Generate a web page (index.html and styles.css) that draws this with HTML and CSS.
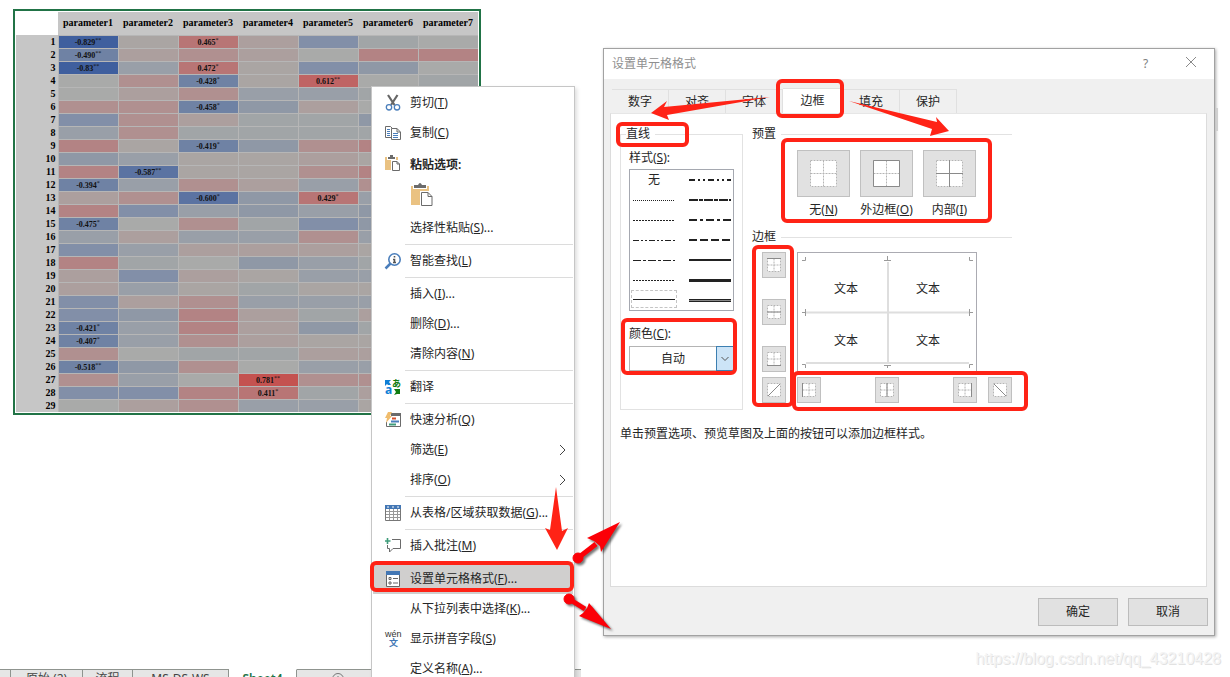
FILE: index.html
```html
<!DOCTYPE html>
<html lang="zh-CN">
<head>
<meta charset="utf-8">
<title>设置单元格格式</title>
<link rel="stylesheet" href="styles.css">
</head>
<body>
<svg class="defs" aria-hidden="true">
  <symbol id="grid-s" viewBox="0 0 14 14">
    <rect x="0" y="0" width="14" height="14" fill="#fff"/>
    <path d="M.5 .5H13.5V13.5H.5ZM7 .5V13.5M.5 7H13.5" fill="none" stroke="#b4b4b4" stroke-dasharray="2 1"/>
  </symbol>
  <symbol id="diag-s" viewBox="0 0 14 14">
    <rect x="0" y="0" width="14" height="14" fill="#fff"/>
    <path d="M.5 .5H13.5V13.5H.5Z" fill="none" stroke="#b4b4b4" stroke-dasharray="2 1"/>
  </symbol>
  <symbol id="grid-l" viewBox="0 0 27 27">
    <rect width="27" height="27" fill="#fff"/>
    <path d="M.5 .5H26.5V26.5H.5ZM13.5 .5V26.5M.5 13.5H26.5" fill="none" stroke="#b4b4b4" stroke-dasharray="2 1"/>
  </symbol>
  <symbol id="paste" viewBox="0 0 16 16">
    <path d="M0 2H13V15H0Z" fill="#eac282"/>
    <path d="M2 1H11V5H2Z" fill="#fff"/>
    <path d="M3 4V2H5V0H8V2H10V4Z" fill="#6b6b6b"/>
    <path d="M6 5H16V16H6Z" fill="#fff"/>
    <path d="M7.500 6.500H12L14.500 9V15.500H7.500ZM12 6.500V9H14.500" fill="#fff" stroke="#6b6b6b"/>
  </symbol>
</svg>

<main class="desktop">
  <section class="sheet">
    <table class="heat">
      <thead>
        <tr><td class="corner"></td><th>parameter1</th><th>parameter2</th><th>parameter3</th><th>parameter4</th><th>parameter5</th><th>parameter6</th><th>parameter7</th></tr>
      </thead>
      <tbody id="heat-body"></tbody>
    </table>
  </section>

  <section class="dialog" role="dialog" aria-labelledby="dialog-title">
    <header class="titlebar">
      <h1 class="title" id="dialog-title">设置单元格格式</h1>
      <button class="title-btn" type="button">?</button>
      <button class="title-btn" type="button" aria-label="关闭"><svg width="12" height="12" viewBox="0 0 12 12"><path d="M1 1L11 11M11 1L1 11" stroke="#8a8a8a" fill="none"/></svg></button>
    </header>
    <div class="tabs" role="tablist">
      <button class="tab" role="tab" type="button">数字</button>
      <button class="tab" role="tab" type="button">对齐</button>
      <button class="tab" role="tab" type="button">字体</button>
      <button class="tab tab-active" role="tab" type="button" aria-selected="true">边框</button>
      <button class="tab" role="tab" type="button">填充</button>
      <button class="tab" role="tab" type="button">保护</button>
    </div>
    <div class="panel" role="tabpanel">
      <div class="columns">
        <fieldset class="group line-group">
          <legend>直线</legend>
          <div class="label" id="style-label">样式(<u>S</u>):</div>
          <div class="styles" role="listbox" aria-labelledby="style-label">
            <span class="style none" role="option">无</span>
            <span class="style" role="option"><svg viewBox="0 0 42 6"><path d="M0 3H42" stroke-dasharray="6 3 2 3 2 3" stroke-width="2"/></svg></span>
            <span class="style" role="option"><svg viewBox="0 0 42 6"><path d="M0 3.500H42" stroke-dasharray="1 1"/></svg></span>
            <span class="style" role="option"><svg viewBox="0 0 42 6"><path d="M0 3H42" stroke-dasharray="9 1 4 1" stroke-width="2"/></svg></span>
            <span class="style" role="option"><svg viewBox="0 0 42 6"><path d="M0 3.500H42" stroke-dasharray="2 1"/></svg></span>
            <span class="style" role="option"><svg viewBox="0 0 42 6"><path d="M0 3H42" stroke-dasharray="8 3 3 3" stroke-width="2"/></svg></span>
            <span class="style" role="option"><svg viewBox="0 0 42 6"><path d="M0 3.500H42" stroke-dasharray="6 2 2 2 2 2"/></svg></span>
            <span class="style" role="option"><svg viewBox="0 0 42 6"><path d="M0 3H42" stroke-dasharray="8 3" stroke-width="2"/></svg></span>
            <span class="style" role="option"><svg viewBox="0 0 42 6"><path d="M0 3.500H42" stroke-dasharray="8 2 3 2"/></svg></span>
            <span class="style" role="option"><svg viewBox="0 0 42 6"><path d="M0 3H42" stroke-width="2"/></svg></span>
            <span class="style" role="option"><svg viewBox="0 0 42 6"><path d="M0 3.500H42" stroke-dasharray="2 1"/></svg></span>
            <span class="style" role="option"><svg viewBox="0 0 42 6"><path d="M0 3.500H42" stroke-width="3"/></svg></span>
            <span class="style chosen" role="option" aria-selected="true"><svg viewBox="0 0 42 6"><path d="M0 3.500H42"/></svg></span>
            <span class="style" role="option"><svg viewBox="0 0 42 6"><path d="M0 2.500H42M0 4.500H42"/><path d="M0 3.500H42" class="soft"/></svg></span>
          </div>
          <label class="label color-label" for="color">颜色(<u>C</u>):</label>
          <div class="combo">
            <select class="combo-select" id="color"><option>自动</option></select>
            <span class="combo-arrow"><svg width="8" height="6" viewBox="0 0 8 6"><path d="M.5 1L4 4.500L7.500 1" fill="none" stroke="#555"/></svg></span>
          </div>
        </fieldset>

        <div class="right-col">
          <fieldset class="group flat">
            <legend>预置</legend>
            <div class="presets">
              <div class="preset"><button class="cell-btn big" id="p-none" type="button" aria-label="无"><svg width="27" height="27"><use href="#grid-l"/></svg></button><label for="p-none">无(<u>N</u>)</label></div>
              <div class="preset"><button class="cell-btn big" id="p-out" type="button" aria-label="外边框"><svg width="27" height="27"><use href="#grid-l"/><path class="ink" d="M.5 .5H26.5V26.5H.5Z"/></svg></button><label for="p-out">外边框(<u>O</u>)</label></div>
              <div class="preset"><button class="cell-btn big" id="p-in" type="button" aria-label="内部"><svg width="27" height="27"><use href="#grid-l"/><path class="ink" d="M13.500 0V27M0 13.500H27"/></svg></button><label for="p-in">内部(<u>I</u>)</label></div>
            </div>
          </fieldset>
          <fieldset class="group flat">
            <legend>边框</legend>
            <div class="borders">
              <div class="side">
                <button class="cell-btn" type="button" aria-label="上边框"><svg width="14" height="14"><use href="#grid-s"/><path class="ink" d="M0 .5H14"/></svg></button>
                <button class="cell-btn" type="button" aria-label="水平内框"><svg width="14" height="14"><use href="#grid-s"/><path class="ink" d="M0 7H14"/></svg></button>
                <button class="cell-btn" type="button" aria-label="下边框"><svg width="14" height="14"><use href="#grid-s"/><path class="ink" d="M0 13.500H14"/></svg></button>
              </div>
              <div class="preview">
                <span>文本</span><span>文本</span><span>文本</span><span>文本</span>
                <svg class="guides" viewBox="0 0 178 118">
                  <path d="M90 9V110M8 59.500H171M8 110H171" stroke="#dedede" stroke-width="2"/>
                  <path d="M4 7.500H7.500V4M86 7.500H93M89.500 3V7M175 7.500H171.500V4M4 59.500H8M7.500 56V63M175 59.500H171M171.500 56V63M4 111.500H7.500V115M86 112.500H93M89.500 112V115M175 111.500H171.500V115" stroke="#9a9a9a"/>
                </svg>
              </div>
              <span></span>
              <button class="cell-btn" type="button" aria-label="斜线"><svg width="14" height="14"><use href="#diag-s"/><path class="ink" d="M1 13L13 1"/></svg></button>
              <div class="below">
                <button class="cell-btn" type="button" aria-label="左边框"><svg width="14" height="14"><use href="#grid-s"/><path class="ink" d="M.5 0V14"/></svg></button>
                <button class="cell-btn" type="button" aria-label="垂直内框"><svg width="14" height="14"><use href="#grid-s"/><path class="ink" d="M7 0V14"/></svg></button>
                <button class="cell-btn" type="button" aria-label="右边框"><svg width="14" height="14"><use href="#grid-s"/><path class="ink" d="M13.500 0V14"/></svg></button>
              </div>
              <button class="cell-btn" type="button" aria-label="反斜线"><svg width="14" height="14"><use href="#diag-s"/><path class="ink" d="M1 1L13 13"/></svg></button>
            </div>
          </fieldset>
        </div>
      </div>
      <p class="hint">单击预置选项、预览草图及上面的按钮可以添加边框样式。</p>
    </div>
    <footer class="actions">
      <button class="action" type="button">确定</button>
      <button class="action" type="button">取消</button>
    </footer>
  </section>

  <nav class="menu" role="menu">
    <button class="item" type="button"><svg class="icon" viewBox="0 0 16 16"><path d="M3 0L9.500 10M12.500 0L6 10" stroke="#666" stroke-width="2.200" fill="none"/><circle cx="4" cy="12.300" r="2.700" fill="#fff" stroke="#4a7ebb" stroke-width="1.300"/><circle cx="12" cy="12.300" r="2.700" fill="#fff" stroke="#4a7ebb" stroke-width="1.300"/></svg><span>剪切(<u>T</u>)</span></button>
    <button class="item" type="button"><svg class="icon" viewBox="0 0 16 16"><path d="M.5 1.500H5.500L8 4V12.500H.5Z" fill="#fff" stroke="#6b6b6b"/><path d="M2 4.500H5M2 6.500H5M2 8.500H5M2 10.500H5" stroke="#4a7ebb"/><path d="M6.500 3.500H12L15.500 7V14.500H6.500ZM12 3.500V7H15" fill="#fff" stroke="#6b6b6b"/><path d="M8 8.500H13M8 10.500H13M8 12.500H13" stroke="#4a7ebb"/></svg><span>复制(<u>C</u>)</span></button>
    <div class="item heading"><svg class="icon" viewBox="0 0 16 16"><use href="#paste"/></svg><span class="heading-text">粘贴选项:</span></div>
    <div class="paste-row"><button class="paste-btn" type="button" aria-label="粘贴"><svg width="24" height="24" viewBox="0 0 24 24"><path d="M1 4H19V23H1Z" fill="#eac282"/><path d="M3 3H17V7H3Z" fill="#fff"/><path d="M4 6V3H8Q10 -1 12 3H16V6Z" fill="#6b6b6b"/><path d="M10 9H24V24H10Z" fill="#fff"/><path d="M11.500 10.500H18L22 14.500V23.500H11.500ZM18 10.500V14.500H22" fill="#fff" stroke="#6b6b6b"/></svg></button></div>
    <button class="item" type="button"><span class="icon"></span><span>选择性粘贴(<u>S</u>)...</span></button>
    <hr class="sep">
    <button class="item" type="button"><svg class="icon" viewBox="0 0 16 16"><path d="M.5 15.500L5.500 10.500" stroke="#4a7ebb" stroke-width="2.500"/><circle cx="9.500" cy="6.500" r="5.700" fill="#fff" stroke="#4a7ebb" stroke-width="1.600"/><path d="M9.500 3V4.500M8 6.500H9.500V10M8 9.500H11" stroke="#555" stroke-width="1.600" fill="none"/></svg><span>智能查找(<u>L</u>)</span></button>
    <hr class="sep">
    <button class="item" type="button"><span class="icon"></span><span>插入(<u>I</u>)...</span></button>
    <button class="item" type="button"><span class="icon"></span><span>删除(<u>D</u>)...</span></button>
    <button class="item" type="button"><span class="icon"></span><span>清除内容(<u>N</u>)</span></button>
    <hr class="sep">
    <button class="item" type="button"><svg class="icon" viewBox="0 0 16 16"><path d="M0 1H6L4 3L6 6H3L2 5L0 7Z" fill="#0f7fd6"/><text x="0" y="15" class="tr-a">a</text><text x="7" y="8" class="tr-k">あ</text><path d="M9 10H15V15H12L9 16L11 13Z" fill="#107c10"/></svg><span>翻译</span></button>
    <hr class="sep">
    <button class="item" type="button"><svg class="icon" viewBox="0 0 16 16"><path d="M3.500 1.500H15.500V14.500H1.500V10" fill="#fff" stroke="#6b6b6b"/><path d="M6 1H16V4H6Z" fill="#6b6b6b"/><path d="M7 6.500H11" stroke="#d9502c" stroke-width="2"/><path d="M6 9.500H14" stroke="#4a7ebb" stroke-width="2"/><path d="M4 12.500H11" stroke="#3f9c7a" stroke-width="2"/><path d="M3 0H7L5 4H7L1 11L2 6H0Z" fill="#f0bc6c"/></svg><span>快速分析(<u>Q</u>)</span></button>
    <button class="item" type="button"><span class="icon"></span><span>筛选(<u>E</u>)</span><svg class="chev" viewBox="0 0 7 12"><path d="M1 1L6 6L1 11" fill="none" stroke="#444"/></svg></button>
    <button class="item" type="button"><span class="icon"></span><span>排序(<u>O</u>)</span><svg class="chev" viewBox="0 0 7 12"><path d="M1 1L6 6L1 11" fill="none" stroke="#444"/></svg></button>
    <hr class="sep">
    <button class="item" type="button"><svg class="icon" viewBox="0 0 16 16"><path d="M.5 .5H15.500V15.500H.5Z" fill="#fff" stroke="#777"/><path d="M0 0H16V4H0Z" fill="#4377b4"/><path d="M2 2H4M7 2H9M12 2H14" stroke="#fff"/><path d="M4.500 4V15M8.500 4V15M12.500 4V15M1 6.500H15M1 9.500H15M1 12.500H15" stroke="#999"/></svg><span>从表格/区域获取数据(<u>G</u>)...</span></button>
    <hr class="sep">
    <button class="item" type="button"><svg class="icon" viewBox="0 0 16 16"><path d="M7 1.500H15.500V10.500H8L4.500 14V10.500H2.500V7" fill="none" stroke="#6b6b6b"/><path d="M2.500 0V6M0 3H5.500" stroke="#3f9c7a" stroke-width="1.600"/></svg><span>插入批注(<u>M</u>)</span></button>
    <hr class="sep">
    <button class="item item-hot" type="button"><svg class="icon" viewBox="0 0 16 16"><path d="M1.500 1.500H14.500V15.500H1.500Z" fill="#fff" stroke="#666"/><path d="M1 0H15V4H1Z" fill="#4377b4"/><path d="M8 7.500H13M8 12H13" stroke="#666"/><path d="M4 6.500H6V8.500H4ZM4 11H6V13H4Z" stroke="#666" fill="#fff"/></svg><span>设置单元格格式(<u>F</u>)...</span></button>
    <button class="item" type="button"><span class="icon"></span><span>从下拉列表中选择(<u>K</u>)...</span></button>
    <button class="item" type="button"><svg class="icon" viewBox="0 0 16 16"><text x="0" y="6" class="py-w">wén</text><text x="4" y="15" class="py-z">文</text></svg><span>显示拼音字段(<u>S</u>)</span></button>
    <button class="item" type="button"><span class="icon"></span><span>定义名称(<u>A</u>)...</span></button>
  </nav>

  <p class="watermark">https://blog.csdn.net/qq_43210428</p>

  <svg class="marks" width="1230" height="677" viewBox="0 0 1230 677" aria-hidden="true">
    <path d="M1216 108H1218V131H1216Z" fill="#d0d0d0"/>
    <g fill="none" stroke="#ff2316" stroke-width="4">
      <rect x="778" y="81" width="64" height="35" rx="4"/>
      <rect x="618" y="124" width="69" height="21" rx="4"/>
      <rect x="783" y="140" width="207" height="81" rx="4"/>
      <rect x="623" y="320" width="112" height="53" rx="4"/>
      <rect x="754" y="247" width="38" height="158" rx="4"/>
      <rect x="794" y="373" width="232" height="36" rx="4"/>
      <rect x="372" y="563" width="200" height="27" rx="4"/>
    </g>
    <g fill="#ff2316">
      <path d="M770 97L664 107L667 101L651 113L669 120L667 115Z"/>
      <path d="M849 101L937 122L936 117L949 131L930 136L932 129Z"/>
      <path d="M556 487L562 531L568 528L557 550L545 528L550 530Z"/>
    </g>
    <g class="pins" fill="#fb0007" stroke="#fb0007">
      <g><circle cx="578" cy="558" r="5"/><path d="M578 558L596 544" stroke-width="5"/><path d="M620 522L587 538L594 541L600 546L601 552Z" stroke="none"/></g>
      <g><circle cx="569" cy="599" r="5"/><path d="M569 599L585 609" stroke-width="5"/><path d="M611 629L589 603L587 608L583 613L579 616Z" stroke="none"/></g>
    </g>
  </svg>
</main>

<footer class="sheet-tabs">
  <span class="nav-gap"></span>
  <button class="sheet-tab t1" type="button">原始 (2)</button>
  <button class="sheet-tab t2" type="button">流程</button>
  <button class="sheet-tab t3" type="button">MS-DS-WS</button>
  <button class="sheet-tab sheet-active" type="button">Sheet4</button>
  <span class="add-tab"><svg width="12" height="12" viewBox="0 0 12 12"><circle cx="6" cy="6" r="5.500" fill="none" stroke="#777"/><path d="M6 3V9M3 6H9" stroke="#777"/></svg></span>
</footer>
<script src="script.js"></script>
</body>
</html>
```

FILE: styles.css
```css
* { box-sizing: border-box; }

body {
  margin: 0;
  height: 100vh;
  display: flex;
  flex-direction: column;
  overflow: hidden;
  background: #fff;
  color: #262626;
  font: 12px/16px "Noto Sans", "Noto Sans CJK SC", sans-serif;
}

button, select { font: inherit; color: inherit; margin: 0; padding: 0; }
u { text-underline-offset: 1px; }
.defs { position: absolute; width: 0; height: 0; }
.desktop { flex: 1; min-height: 0; }

/* heat map */
.sheet {
  position: absolute;
  left: 13px;
  top: 9px;
  border: 2px solid #217346;
  padding: 1px;
  background: #fff;
}
.heat {
  border-collapse: collapse;
  table-layout: fixed;
  width: 462px;
  font: bold 10px/12px "Liberation Serif", serif;
  color: #111;
}
.heat th, .heat td { padding: 0; }
.heat thead th { height: 23px; width: 60px; background: #c6c6c6; color: #000; }
.heat .corner { width: 42px; background: #fff; }
.heat tbody th { height: 13px; padding-right: 2px; text-align: right; background: #c6c6c6; color: #000; }
.heat tbody td {
  border: solid #b6b6b6;
  border-width: 1px 0 0 1px;
  text-align: center;
  font-size: 8px;
  line-height: 10px;
  padding-top: 2px;
}
.heat sup { font-size: 6px; line-height: 0; vertical-align: 3px; font-weight: 400; }

/* context menu */
.menu {
  position: absolute;
  left: 371px;
  top: 86px;
  width: 204px;
  padding: 1px 1px 20px;
  background: #fff;
  border: 1px solid #c6c6c6;
  box-shadow: 2px 2px 4px #0002;
}
.item {
  display: flex;
  align-items: center;
  gap: 9px;
  width: 100%;
  height: 30px;
  padding: 0 7px 0 12px;
  border: 0;
  background: none;
  text-align: left;
  white-space: nowrap;
}
.heading { font-weight: 600; }
.heading-text { padding-top: 3px; }
.item-hot { background: #d0cfce; }
.icon { flex: none; width: 16px; height: 16px; overflow: visible; }
.chev { width: 7px; height: 12px; margin-left: auto; }
.sep { margin: 1px 0 1px 32px; border: 0; height: 1px; background: #dcdcdc; }
.paste-row { height: 35px; padding: 4px 0 0 37px; }
.paste-btn { display: block; border: 0; background: none; }
.paste-btn svg { display: block; }
.tr-a { font: bold 12px "Noto Sans", sans-serif; fill: #0f7fd6; }
.tr-k { font: bold 9px "Noto Sans CJK SC", sans-serif; fill: #107c10; }
.py-w { font: 9px "Liberation Sans", sans-serif; fill: #333; }
.py-z { font: bold 9px "Noto Sans CJK SC", sans-serif; fill: #4377b4; }

/* dialog */
.dialog {
  position: absolute;
  left: 603px;
  right: 15px;
  top: 48px;
  background: #f0f0f0;
  border: 1px solid #a2a2a2;
  box-shadow: 1px 1px 3px #0005;
}
.titlebar { display: flex; align-items: center; height: 30px; background: #fff; padding: 0 1px 0 8px; }
.title { flex: 1; margin: 0; font-size: 12px; font-weight: 400; color: #8f8f8f; }
.title-btn { width: 45px; height: 30px; border: 0; background: none; color: #808080; }
.tabs { display: flex; align-items: flex-end; padding: 9px 8px 0; }
.tab { width: 57px; height: 24px; border: 1px solid #e0e0e0; border-width: 1px 1px 0 0; background: #f0f0f0; }
.tab-active { width: 60px; height: 25px; background: #fff; }
.panel {
  margin: 0 7px 0 6px;
  min-height: 474px;
  padding: 12px 9px;
  background: #fff;
  border: 1px solid #dcdcdc;
  border-top-color: #e6e6e6;
}
.columns { display: flex; align-items: flex-start; gap: 9px; }
.group { margin: 0; min-width: 0; border: 1px solid #e2e2e2; }
.group legend { padding: 0 5px 0 0; }
.line-group { width: 123px; padding: 8px 8px 38px; }
.line-group legend { margin-left: -3px; }
.flat { width: 260px; border-width: 1px 0 0; padding: 0; }
.label { display: block; }
.styles {
  display: grid;
  grid-template-columns: 44px 42px;
  grid-auto-rows: 20px;
  justify-content: space-between;
  margin-top: 3px;
  padding: 0 2px;
  border: 1px solid #a5a8b0;
}
.style { display: flex; align-items: center; justify-content: center; }
.style svg { width: 42px; height: 6px; fill: none; stroke: #222; }
.style .soft { stroke: #888; }
.chosen { height: 16px; margin-top: 1px; outline: 1px dashed #c4c4c4; }
.color-label { margin-top: 15px; }
.combo { position: relative; margin-top: 4px; }
.combo-select {
  display: block;
  appearance: none;
  width: 100%;
  height: 25px;
  padding-right: 17px;
  border: 1px solid #b4b4b4;
  border-radius: 0;
  background: #fff;
  text-align: center;
  text-align-last: center;
}
.combo-arrow {
  position: absolute;
  right: 0;
  top: 0;
  display: grid;
  place-items: center;
  width: 18px;
  height: 25px;
  background: #cce4f7;
  border: 1px solid #3c7fb1;
  pointer-events: none;
}
.right-col { display: flex; flex-direction: column; gap: 11px; }
.presets { display: flex; gap: 10px; padding: 8px 0 0 45px; }
.preset { display: flex; flex-direction: column; align-items: center; gap: 5px; width: 53px; white-space: nowrap; }
.cell-btn {
  display: grid;
  place-items: center;
  width: 24px;
  height: 26px;
  border: 1px solid #c0c0c0;
  background: #e1e1e1;
}
.cell-btn svg { display: block; }
.big { width: 53px; height: 47px; }
.ink { stroke: #8a8a8a; fill: none; }
.borders {
  display: grid;
  grid-template-columns: 24px 180px 24px;
  grid-template-rows: 120px 26px;
  gap: 5px 11px;
  padding: 7px 0 0 10px;
}
.side { display: flex; flex-direction: column; justify-content: space-between; }
.below { display: flex; justify-content: space-between; }
.preview {
  position: relative;
  display: grid;
  grid-template-columns: 1fr 1fr;
  grid-template-rows: 1fr 1fr;
  place-items: center;
  padding: 10px 7px 4px;
  border: 1px solid #ababb2;
}
.guides { position: absolute; left: 0; top: 0; width: 100%; height: 100%; fill: none; }
.hint { margin: 16px 0 0; }
.actions { display: flex; justify-content: flex-end; gap: 10px; padding: 11px 6px 9px; }
.action { width: 80px; height: 28px; border: 1px solid #bcbcbc; background: #e1e1e1; }

.watermark {
  position: absolute;
  right: 9px;
  bottom: 9px;
  margin: 0;
  font: 16px/18px "Liberation Sans", Arial, sans-serif;
  color: #f4f4f4;
  text-shadow: 1px 1px 0 #e2e2e2;
}
.marks { position: absolute; left: 0; top: 0; pointer-events: none; }
.pins { filter: drop-shadow(2px 2px 1px #0008); }

/* worksheet tabs */
.sheet-tabs {
  display: flex;
  flex: none;
  width: 581px;
  height: 8px;
  overflow: hidden;
}
.sheet-tabs > * {
  height: 19px;
  padding: 0;
  border: solid #8f948f;
  border-width: 1px 1px 0 0;
  background: #e6e6e6;
  color: #444;
  text-align: center;
  white-space: nowrap;
}
.sheet-tabs .nav-gap { width: 11px; }
.sheet-tabs .t1 { width: 72px; }
.sheet-tabs .t2 { width: 50px; }
.sheet-tabs .t3 { width: 96px; }
.sheet-tabs .sheet-active { width: 68px; border-top-color: #fff; background: #fff; color: #217346; font-weight: 600; }
.sheet-tabs .add-tab { flex: 1; padding: 3px 0 0 35px; border-right: 0; text-align: left; }
```

FILE: script.js
```js
// One letter per cell, from strong negative (a) to strong positive (o).
const tones = {
  a: "#3f5f9e", b: "#5b73a2", c: "#6f82a4", d: "#828fa8", e: "#8f98a6",
  f: "#999fa8", g: "#a1a5a7", h: "#a9aaa9", i: "#aaa5a3", j: "#ac9f9e",
  k: "#b09090", l: "#b38384", m: "#b87575", n: "#bf6464", o: "#c45250"
};
const rows = [
  "aimjdgh", "cjkjhll", "afmideh", "hkcinhg", "hjkffgh", "kkcejhh",
  "dkjggeh", "fkggggh", "liceklh", "efiijih", "lbiiklh", "cfkjfkh",
  "jkbemfh", "ldfefeh", "chkgdeh", "fjffkfh", "dfjjjih", "lghefgh",
  "jdjiffh", "jfigiih", "djkfffh", "deljgjh", "cfljegh", "cfkjiih",
  "khggjjh", "cekhffh", "kfhokkh", "ddlmgjh", "hjkffih"
];
const values = {
  "1-1": "-0.829**", "1-3": "0.465*", "2-1": "-0.490**", "3-1": "-0.83**",
  "3-3": "0.472*", "4-3": "-0.428*", "4-5": "0.612**", "6-3": "-0.458*",
  "9-3": "-0.419*", "11-2": "-0.587**", "12-1": "-0.394*", "13-3": "-0.600*",
  "13-5": "0.429*", "15-1": "-0.475*", "23-1": "-0.421*", "24-1": "-0.407*",
  "26-1": "-0.518**", "27-4": "0.781**", "28-4": "0.411*"
};
document.getElementById("heat-body").innerHTML = rows.map((row, r) => {
  const cells = [...row].map((tone, c) => {
    const value = (values[`${r + 1}-${c + 1}`] || "").replace(/\*+/, "<sup>$&</sup>");
    return `<td style="background:${tones[tone]}">${value}</td>`;
  }).join("");
  return `<tr><th scope="row">${r + 1}</th>${cells}</tr>`;
}).join("");
```
